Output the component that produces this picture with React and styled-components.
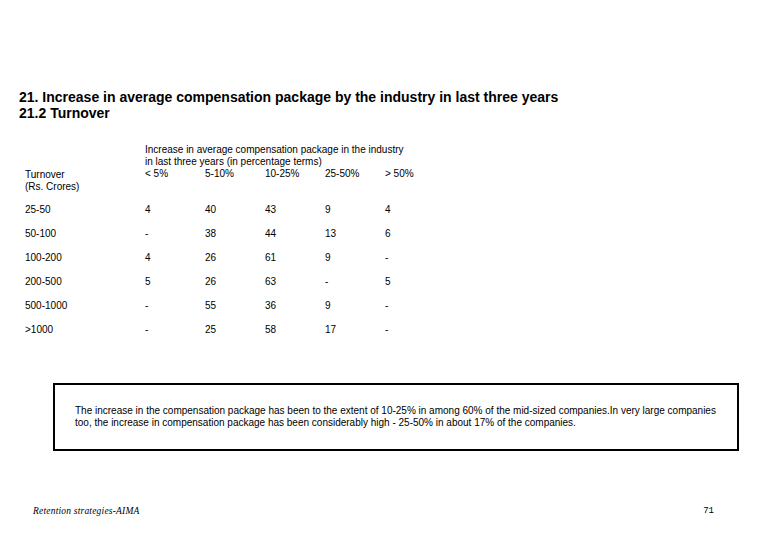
import React from 'react';
import styled, { createGlobalStyle } from 'styled-components';

const GlobalStyle = createGlobalStyle`
  html, body {
    margin: 0;
    padding: 0;
    background: #fff;
  }
  body {
    font-family: "Liberation Sans", Arial, sans-serif;
    color: #000;
  }
`;

const Page = styled.div`
  width: 780px;
  height: 540px;
  display: flex;
  flex-direction: column;
  box-sizing: border-box;
  padding-top: 89px;
`;

const Title = styled.h1`
  margin: 0 0 0 19px;
  font-size: 14px;
  line-height: 16px;
  font-weight: bold;
`;

const Table = styled.div`
  margin: 23px 0 0 25px;
  display: grid;
  grid-template-columns: 120px 60px 60px 60px 60px 60px;
  font-size: 10px;
`;

const HeadLabel = styled.div`
  grid-row: 1;
  grid-column: 1;
  align-self: end;
  line-height: 12px;
  padding-bottom: 5px;
`;

const HeadGroup = styled.div`
  grid-row: 1;
  grid-column: 2 / span 5;
  display: grid;
  grid-template-columns: repeat(5, 60px);
  line-height: 12px;
  padding-bottom: 18px;
`;

const HeadCaption = styled.div`
  grid-column: 1 / -1;
  white-space: nowrap;
`;

const Cell = styled.div`
  height: 24px;
  line-height: 24px;
  white-space: nowrap;
`;

const Note = styled.div`
  margin: 41px 0 0 53px;
  width: 686px;
  height: 68px;
  box-sizing: border-box;
  border: 2px solid #000;
  padding: 20px 0 0 20px;
  font-size: 10px;
  line-height: 12px;
  white-space: nowrap;
`;

const Footer = styled.div`
  margin-top: 55px;
  display: flex;
  justify-content: space-between;
  align-items: center;
  padding: 0 66px 0 33px;
`;

const Source = styled.span`
  font-family: "Liberation Serif", "Times New Roman", serif;
  font-style: italic;
  font-size: 9.5px;
  letter-spacing: 0.2px;
`;

const PageNo = styled.span`
  font-family: "Liberation Mono", "Courier New", monospace;
  font-size: 9px;
`;

const columns = ['< 5%', '5-10%', '10-25%', '25-50%', '> 50%'];

const rows = [
  ['25-50', '4', '40', '43', '9', '4'],
  ['50-100', '-', '38', '44', '13', '6'],
  ['100-200', '4', '26', '61', '9', '-'],
  ['200-500', '5', '26', '63', '-', '5'],
  ['500-1000', '-', '55', '36', '9', '-'],
  ['>1000', '-', '25', '58', '17', '-'],
];

export default function App() {
  return (
    <>
      <GlobalStyle />
      <Page>
        <Title>
          21. Increase in average compensation package by the industry in last three years
          <br />
          21.2 Turnover
        </Title>

        <Table>
          <HeadLabel>
            Turnover
            <br />
            (Rs. Crores)
          </HeadLabel>
          <HeadGroup>
            <HeadCaption>
              Increase in average compensation package in the industry
              <br />
              in last three years (in percentage terms)
            </HeadCaption>
            {columns.map(c => (
              <div key={c}>{c}</div>
            ))}
          </HeadGroup>
          {rows.map(row =>
            row.map((v, i) => <Cell key={row[0] + i}>{v}</Cell>)
          )}
        </Table>

        <Note>
          The increase in the compensation package has been to the extent of 10-25% in among 60% of the mid-sized companies.In very large companies
          <br />
          too, the increase in compensation package has been considerably high - 25-50% in about 17% of the companies.
        </Note>

        <Footer>
          <Source>Retention strategies-AIMA</Source>
          <PageNo>71</PageNo>
        </Footer>
      </Page>
    </>
  );
}
